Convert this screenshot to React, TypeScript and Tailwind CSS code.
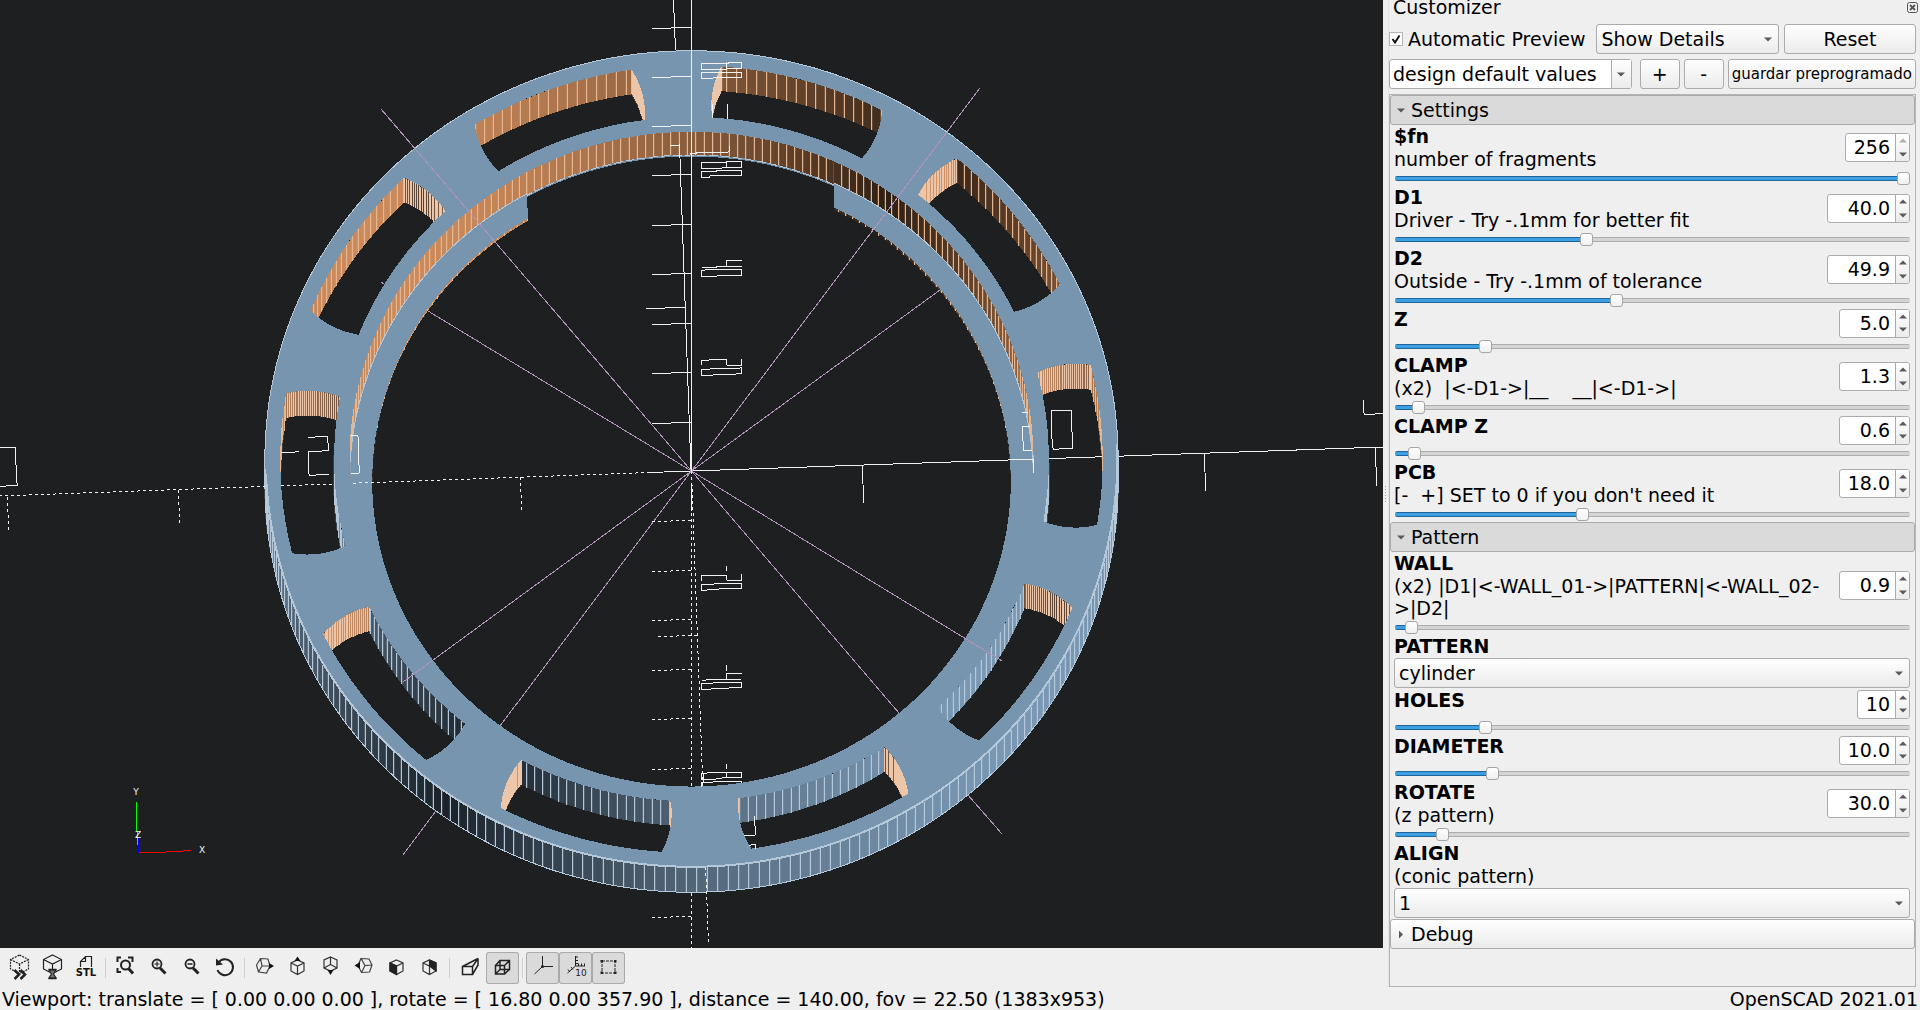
import { useState } from "react";
import type { CSSProperties, ReactNode } from "react";

// ---------------------------------------------------------------------------
// 3D scene: orthographic view of the ring
// ---------------------------------------------------------------------------

const SCALE = 17.1;
const CX = 691.5;
const CY = 471.5;
const TILT = (16.8 * Math.PI) / 180;
const SPIN = (2.1 * Math.PI) / 180;
const STEP = (2 * Math.PI) / 256;

type Rgb = [number, number, number];
const STEEL: Rgb = [122, 152, 180];
const COPPER: Rgb = [204, 138, 90];

const R_OUT = 24.95;
const R_SLOT_OUT = 24.05;
const R_SLOT_IN = 20.9;
const R_IN = 20;
const R_CLAMP = 18.7;
const TOP = 2.5;
const BOTTOM = -2.5;
const LEDGE = -1.9;

const project = (x: number, y: number, z: number) => {
  const vx = x * Math.cos(SPIN) - y * Math.sin(SPIN);
  const vy = x * Math.sin(SPIN) + y * Math.cos(SPIN);
  const sx = CX + SCALE * vx;
  const sy = CY - SCALE * (vy * Math.cos(TILT) + z * Math.sin(TILT));
  return `${sx.toFixed(1)},${sy.toFixed(1)}`;
};

const arc = (r: number, a0: number, a1: number, z: number, cx = 0, cy = 0) => {
  const n = Math.max(2, Math.ceil(Math.abs(a1 - a0) / STEP));
  const pts: string[] = [];
  for (let i = 0; i <= n; i++) {
    const a = a0 + ((a1 - a0) * i) / n;
    pts.push(project(cx + r * Math.cos(a), cy + r * Math.sin(a), z));
  }
  return pts;
};

const shade = (color: Rgb, normal: number) => {
  const light = 0.22 + 0.78 * Math.abs(Math.cos(normal + SPIN - (325 * Math.PI) / 180));
  return `rgb(${color.map((c) => Math.round(c * light)).join(",")})`;
};

interface WallProps {
  r: number;
  from: number;
  to: number;
  top: number;
  bottom: number;
  color: Rgb;
  seam: string;
  cx?: number;
  cy?: number;
  inward?: boolean;
}

const Wall = ({ r, from, to, top, bottom, color, seam, cx = 0, cy = 0, inward = false }: WallProps) => {
  const first = Math.ceil(from / STEP);
  const last = Math.floor(to / STEP);
  const cuts = [from];
  for (let k = first; k <= last; k++) cuts.push(k * STEP);
  cuts.push(to);

  const at = (a: number, z: number) => project(cx + r * Math.cos(a), cy + r * Math.sin(a), z);
  const facing = (a: number) => Math.sin((inward ? a + Math.PI : a) + SPIN) < 0.02;
  const faces: ReactNode[] = [];
  let seams = "";

  for (let i = 0; i < cuts.length - 1; i++) {
    const mid = (cuts[i] + cuts[i + 1]) / 2;
    if (!facing(mid)) continue;
    const [a, b] = [cuts[i], cuts[i + 1]];
    faces.push(
      <polygon
        key={i}
        points={[at(a, top), at(b, top), at(b, bottom), at(a, bottom)].join(" ")}
        fill={shade(color, inward ? mid + Math.PI : mid)}
      />
    );
    seams += `M${at(a, top)}L${at(a, bottom)}`;
  }

  return (
    <g>
      {faces}
      <path d={seams} stroke={seam} strokeWidth="2" strokeOpacity="0.2" fill="none" />
      <path d={seams} stroke={seam} fill="none" />
    </g>
  );
};

const poly = (pts: string[]) => `M${pts.join("L")}Z`;
const line = (pts: string[]) => `M${pts.join("L")}`;

// Each slot is the space between both walls cut by a cylinder of d = 10
const HOLE_R = 5;
const HOLE_C = (R_SLOT_OUT + R_SLOT_IN) / 2;
const hitAngle = (r: number, hole = HOLE_R) =>
  Math.acos((r * r + HOLE_C * HOLE_C - hole * hole) / (2 * r * HOLE_C));
const capAngle = (r: number, half: number) =>
  Math.atan2(r * Math.sin(half), r * Math.cos(half) - HOLE_C);
const OUT_HALF = hitAngle(R_SLOT_OUT);
const IN_HALF = hitAngle(R_SLOT_IN);
const CAP_A = capAngle(R_SLOT_OUT, OUT_HALF);
const CAP_B = capAngle(R_SLOT_IN, IN_HALF);

const slotOutline = (a: number, pad: number) => {
  const cx = HOLE_C * Math.cos(a);
  const cy = HOLE_C * Math.sin(a);
  const outer = R_SLOT_OUT + pad;
  const inner = R_SLOT_IN - pad;
  const hole = HOLE_R + pad;
  const outHalf = hitAngle(outer, hole);
  const inHalf = hitAngle(inner, hole);
  const capA = capAngle(outer, outHalf);
  const capB = capAngle(inner, inHalf);
  return poly([
    ...arc(outer, a - outHalf, a + outHalf, TOP),
    ...arc(hole, a + capA, a + capB, TOP, cx, cy),
    ...arc(inner, a + inHalf, a - inHalf, TOP),
    ...arc(hole, a - capB, a - capA, TOP, cx, cy),
  ]);
};

const slots = Array.from({ length: 10 }, (_, i) => {
  const a = (i * Math.PI) / 5;
  return { a, cx: HOLE_C * Math.cos(a), cy: HOLE_C * Math.sin(a) };
});

const FULL = 2 * Math.PI;
const PCB_Y = Math.acos(9 / R_IN);
const PCB_C = Math.acos(9 / R_CLAMP);

const topFace =
  poly(arc(R_OUT, 0, FULL, TOP)) +
  poly(arc(R_IN, 0, FULL, TOP)) +
  slots.map((s) => slotOutline(s.a, 0)).join("");

const ledge = poly([
  ...arc(R_IN, Math.PI - PCB_Y, FULL + PCB_Y, LEDGE),
  ...arc(R_CLAMP, FULL + PCB_C, Math.PI - PCB_C, LEDGE),
]);

const PEACH = "#edc5a8";
const SAND = "#e4b792";
const PALE = "#b4c8d9";

const Ring = () => (
  <g>
    {/* clips are a bit wider than the openings, the top face hides the rest */}
    <clipPath id="slot-clip">
      <path d={slots.map((s) => slotOutline(s.a, 0.1)).join("")} />
    </clipPath>
    <clipPath id="bore-clip">
      <path d={poly(arc(R_IN + 0.15, 0, FULL, TOP))} />
    </clipPath>

    <Wall r={R_OUT} from={Math.PI - 0.05} to={FULL + 0.02} top={TOP} bottom={BOTTOM} color={STEEL} seam={PALE} />
    <path d={line(arc(R_OUT, Math.PI, FULL, BOTTOM))} stroke={PALE} fill="none" />

    <g clipPath="url(#bore-clip)">
      <Wall r={R_CLAMP} from={0} to={PCB_C} top={LEDGE} bottom={BOTTOM} color={COPPER} seam={SAND} inward />
      <Wall r={R_CLAMP} from={Math.PI - PCB_C} to={Math.PI} top={LEDGE} bottom={BOTTOM} color={COPPER} seam={SAND} inward />
      <Wall r={R_IN} from={PCB_Y} to={Math.PI - PCB_Y} top={TOP} bottom={BOTTOM} color={COPPER} seam={SAND} inward />
      <path d={line(arc(R_IN, PCB_Y, Math.PI - PCB_Y, -2.3))} stroke="#6f8ca5" strokeWidth="2" fill="none" />
      <path d={line(arc(R_IN, PCB_Y, Math.PI - PCB_Y, -2.2))} stroke={PALE} strokeDasharray="9 3" fill="none" />
      <path d={ledge} fill="#7895b0" stroke="#7895b0" />
      <Wall r={R_IN} from={-0.04} to={PCB_Y} top={TOP} bottom={LEDGE} color={COPPER} seam={SAND} inward />
      <Wall r={R_IN} from={Math.PI - PCB_Y} to={Math.PI} top={TOP} bottom={LEDGE} color={COPPER} seam={SAND} inward />
      <path d={line(arc(R_IN, 0, PCB_Y, LEDGE))} stroke={PALE} fill="none" />
      <path d={line(arc(R_IN, Math.PI - PCB_Y, Math.PI, LEDGE))} stroke={PALE} fill="none" />
    </g>

    {/* X and Y axes run inside the body, so the top face goes over them */}
    <g stroke="#f2f2f2" fill="none">
      <path d="M691.5 471L1383 447M691 471L679.5 144M675.5 50L673.5 0" />
      <path d="M862 465L864 503M1204 453L1206 491M1375 447L1377 486M646 309L685 307" />
      <path d="M650 472.5L691 471" />
      <path d="M650 472.5L0 496M691.5 471L708.5 945" strokeDasharray="3 3" />
      <path d="M520 477L522 513M178 490L180 526M7 497L9 532M658 637L697 635" strokeDasharray="3 3" />
    </g>

    <g clipPath="url(#slot-clip)">
      {slots.map(({ a, cx, cy }) => (
        <g key={a}>
          <Wall r={R_SLOT_IN} from={a - IN_HALF} to={a + IN_HALF} top={TOP} bottom={BOTTOM} color={STEEL} seam={PALE} />
          <Wall r={R_SLOT_OUT} from={a - OUT_HALF} to={a + OUT_HALF} top={TOP} bottom={BOTTOM} color={COPPER} seam={SAND} inward />
          <Wall r={HOLE_R} cx={cx} cy={cy} from={a + CAP_A} to={a + CAP_B} top={TOP} bottom={BOTTOM} color={COPPER} seam={PEACH} inward />
          <Wall r={HOLE_R} cx={cx} cy={cy} from={a - CAP_B} to={a - CAP_A} top={TOP} bottom={BOTTOM} color={COPPER} seam={PEACH} inward />
        </g>
      ))}
    </g>

    <path d={topFace} fill="#7895b0" fillRule="evenodd" />
    <path d={line(arc(R_OUT, -0.05, Math.PI + 0.05, TOP))} stroke={PALE} fill="none" />
    <path d={line(arc(R_OUT - 0.05, Math.PI, FULL, TOP))} stroke={PALE} strokeWidth="2" fill="none" />
  </g>
);

const zTicksUp = [28, 77, 126, 175, 225, 274, 324, 373, 423];
const zTicksDown = [521, 571, 620, 670, 719, 769, 917];

const Guides = () => (
  <g fill="none">
    <g stroke="#b294bb">
      <path d="M691.5 471L381 109M691.5 471L980 88M691.5 471L428 311M381 282L384 284" />
      <path d="M691.5 471L940 290M691.5 471L1002 661M691.5 471L403 682" />
      <path d="M691.5 471L899 713M968 795L1002 834M691.5 471L500 726M436 811L403 855" />
    </g>
    <g stroke="#f2f2f2">
      <path d="M691.5 0V471" />
      <path d={zTicksUp.map((y) => `M652 ${y + 1}L691 ${y - 1}`).join("")} />
      <path d="M691.5 471V787M691.5 893V948" strokeDasharray="3 3" />
      <path d={zTicksDown.map((y) => `M652 ${y + 1}L691 ${y - 1}`).join("")} strokeDasharray="3 3" />
      <path d="M691.5 486V511" />
      <path d="M670 145H679V155" />
    </g>
    {/* stroke fragments of the scale markers */}
    <g stroke="#f2f2f2" strokeWidth="3">
      <g transform="translate(690 30) scale(0.3333)">
        <path d="M34 100H117V97H155V116H110V119H34ZM110 119V97M34 127H155V142H70V145H34Z" />
        <path d="M34 397H110V412L90 415H34ZM110 412V394H155V412H110M34 424H80V421H155V438H60V442H34Z" />
        <path d="M155 691H110V709M36 712H80V709H155M34 721L72 718H155V736L50 739H34Z" />
        <path d="M34 1006V991L110 988V1006H155V988M34 1018L155 1014V1030L130 1033L45 1036H34Z" />
        <path d="M67 222V264M112 222V267M0 370H20V367H115V364H118V348" />
        <path d="M1084 1172V1141H1145V1175L1148 1255L1090 1258L1087 1250ZM1027 1261H1000V1250L997 1189H1020M996 1147H1014" />
        <path d="M1030 1288V1330" />
      </g>
      <g transform="translate(690 470) scale(0.3333)">
        <path d="M34 332V316H108M110 288V304M110 316V331H155V313M34 343L155 340V355L58 358L46 361H34Z" />
        <path d="M155 610H110V628M110 585V602M36 631L80 628H152M34 640L155 637V652L46 658H34Z" />
        <path d="M34 928V910L90 907H155V922H110V907M110 882V897M34 928H72L110 922M34 950V937L155 934V938M40 910V935" />
        <path d="M193 1038V1068H196V1096H163M177 1126L196 1123V1137" />
      </g>
      <g transform="translate(0 430) scale(0.3333)">
        <path d="M924 22L984 19V38L986 62L925 65V118L928 136L987 133M842 67H880L897 64" />
        <path d="M0 52H47V78L50 157L53 166L0 169M1052 16H1074L1078 130H1052" />
      </g>
      <path d="M730 90V117L733 133L768 132L789 129" transform="translate(1120 370) scale(0.3333)" />
    </g>
  </g>
);

const Gizmo = () => (
  <g fill="none">
    <path d="M136.5 802V818L137.5 845" stroke="#00ff00" />
    <path d="M138.5 838V853" stroke="#0000ff" />
    <path d="M139 852.5H158L191 850.5" stroke="#ff0000" />
    <g fill="#f2f2f2" className="font-['DejaVu_Sans'] text-[9px]" textAnchor="middle">
      <text x="136" y="795">Y</text>
      <text x="138" y="838">Z</text>
      <text x="202" y="853">X</text>
    </g>
  </g>
);

// ---------------------------------------------------------------------------
// Toolbar
// ---------------------------------------------------------------------------

const hexagon = "M16.5 3L25.5 7.5V17L16.5 21.5L7.5 17V7.5ZM7.5 7.5L16.5 12L25.5 7.5M16.5 12V21.5";
const box = "M16.5 8L23 11V19L16.5 22.5L10 19V11ZM10 11L16.5 14L23 11M16.5 14V22.5";

const icons: Record<string, ReactNode> = {
  Preview: (
    <>
      <path d={hexagon} strokeDasharray="2 1" />
      <path d="M11.5 18L16 22.5L11.5 27M17.5 18L22 22.5L17.5 27" strokeWidth="2.5" />
    </>
  ),
  Render: (
    <>
      <path d={hexagon} />
      <path d="M13 18H20L17.5 22L20 26H13L15.5 22Z" fill="#777" />
      <path d="M12.5 17.5H20.5M12.5 26.5H20.5" strokeWidth="1.5" />
    </>
  ),
  "Export as STL": (
    <>
      <path d="M11.5 15V9.5L16.5 4.5H22.5V15M11.5 9.5H16.5V4.5" />
      <text x="17" y="24" textAnchor="middle" stroke="none" fill="#111" className="font-['DejaVu_Sans'] text-[10px] font-bold">
        STL
      </text>
    </>
  ),
  "View All": (
    <>
      <path d="M8.5 10V5.5H12M19 5.5H23.5V10M8.5 16V20H12" strokeWidth="2" />
      <circle cx="16.5" cy="13" r="4.5" strokeWidth="2" />
      <path d="M19.5 16.5L24 21.5" strokeWidth="3" />
    </>
  ),
  "Zoom In": (
    <>
      <circle cx="15" cy="12" r="4.5" strokeWidth="1.8" />
      <path d="M12.5 12H17.5M15 9.5V14.5" />
      <path d="M18 16L23.5 21.5" strokeWidth="3" />
    </>
  ),
  "Zoom Out": (
    <>
      <circle cx="15" cy="12" r="4.5" strokeWidth="1.8" />
      <path d="M12.5 12H17.5" strokeWidth="1.5" />
      <path d="M18 16L23.5 21.5" strokeWidth="3" />
    </>
  ),
  "Reset View": (
    <>
      <path d="M10.5 10.5A8 8 0 1 1 9.5 18" strokeWidth="2" />
      <path d="M8 6.5V13.5L15 12.5Z" fill="#222" stroke="none" />
    </>
  ),
  Right: (
    <>
      <path d="M12.5 6.5L20 7L22 14L18.5 21L10.5 20L8.5 13ZM12.5 6.5L14 14L10.5 20M14 14H22" stroke="#444" />
      <path d="M21 11L26 14L21 17Z" fill="#111" stroke="none" />
    </>
  ),
  Top: (
    <>
      <path d={box} stroke="#333" />
      <path d="M13.5 9L16.5 4.5L19.5 9Z" fill="#111" stroke="none" />
    </>
  ),
  Bottom: (
    <>
      <path d="M16.5 5L23 8V16L16.5 19L10 16V8ZM16.5 5V12.5L10 16M16.5 12.5L23 16" stroke="#333" />
      <path d="M13.5 18L16.5 23L19.5 18Z" fill="#111" stroke="none" />
    </>
  ),
  Left: (
    <>
      <path d="M14 6.5L22 7L25 13L22.5 20L14.5 20.5L11 13.5ZM25 13L18 13.5L14 6.5M18 13.5L14.5 20.5" stroke="#444" />
      <path d="M13 10L7.5 13.5L13 17Z" fill="#111" stroke="none" />
    </>
  ),
  Front: (
    <>
      <path d={box} stroke="#333" />
      <path d="M10 11L16.5 14V22.5L10 19Z" fill="#222" />
    </>
  ),
  Back: (
    <>
      <path d={box} stroke="#333" />
      <path d="M16.5 8L23 11V19L16.5 14Z" fill="#222" />
    </>
  ),
  Perspective: <path d="M9.5 14.5H19.5V22.5H9.5ZM9.5 14.5L25 6.5L19.5 14.5M25 6.5V13L19.5 22.5" strokeWidth="1.5" />,
  Orthogonal: (
    <path
      d="M9.5 13.5H18.5V22H9.5ZM14 8.5H23.5V17.5H14ZM9.5 13.5L14 8.5M18.5 13.5L23.5 8.5M18.5 22L23.5 17.5M9.5 22L14 17.5"
      strokeWidth="1.5"
    />
  ),
  "Show Axes": (
    <>
      <path d="M16.5 4V14.5H27M16.5 14.5L8.5 22" strokeWidth="1" />
      <circle cx="16.5" cy="14.5" r="1.5" fill="#222" stroke="none" />
    </>
  ),
  "Show Scale Markers": (
    <>
      <path
        d="M16.5 4V14H26M16.5 5H19M16.5 8.5H19M16.5 11.5H19M19.5 14V11.5M22.5 14V11.5M25.5 14V11.5M16.5 14L8.5 21M9 17.5L11 20M12 15L14 17.5"
        strokeWidth="1"
      />
      <text x="22" y="24" textAnchor="middle" stroke="none" fill="#222" className="font-['DejaVu_Sans'] text-[9px]">
        10
      </text>
    </>
  ),
  "Show Edges": (
    <>
      <rect x="10" y="9" width="13" height="12" strokeDasharray="3 1" strokeWidth="1" />
      <path d="M8.5 8H11V10.5H8.5ZM22 8H24.5V10.5H22ZM8.5 19.5H11V22H8.5ZM22 19.5H24.5V22H22Z" fill="#222" stroke="none" />
    </>
  ),
};

const toolGroups = [
  ["Preview", "Render", "Export as STL"],
  ["View All", "Zoom In", "Zoom Out", "Reset View"],
  ["Right", "Top", "Bottom", "Left", "Front", "Back"],
  ["Perspective", "Orthogonal"],
  ["Show Axes", "Show Scale Markers", "Show Edges"],
];

const ToolButton = ({ name, pressed, onClick }: { name: string; pressed: boolean; onClick: () => void }) => (
  <button
    type="button"
    aria-label={name}
    aria-pressed={pressed}
    onClick={onClick}
    className={
      pressed
        ? "h-8 w-[33px] rounded-[3px] bg-[#dadada] shadow-[inset_0_0_0_1px_#aaaaaa]"
        : "h-8 w-[33px] rounded-[3px]"
    }
  >
    <svg viewBox="0 0 33 32" className="h-8 w-[33px]" fill="none" stroke="#222" strokeWidth="1.2" aria-hidden="true">
      {icons[name]}
    </svg>
  </button>
);

const Toolbar = () => {
  const [pressed, setPressed] = useState(["Orthogonal", "Show Axes", "Show Scale Markers", "Show Edges"]);

  const toggle = (name: string) => {
    if (!name.startsWith("Show")) return;
    setPressed((prev) => (prev.includes(name) ? prev.filter((n) => n !== name) : [...prev, name]));
  };

  return (
    <div role="toolbar" aria-label="View" className="flex items-center gap-[7px] px-[3px] pt-1 pb-[3px]">
      {toolGroups.map((group, i) => (
        <div key={group[0]} className="flex items-center gap-[7px]">
          {i > 0 && <span className="-mx-1 h-5 w-px bg-[#cfcfcf]" />}
          <div className="flex">
            {group.map((name) => (
              <ToolButton key={name} name={name} pressed={pressed.includes(name)} onClick={() => toggle(name)} />
            ))}
          </div>
        </div>
      ))}
    </div>
  );
};

// ---------------------------------------------------------------------------
// Customizer
// ---------------------------------------------------------------------------

const raised = "rounded-[3px] border border-[#ababab] bg-linear-to-b from-white to-[#ebebeb]";

const Arrow = ({ className = "" }: { className?: string }) => (
  <svg viewBox="0 0 8 5" className={`h-[5px] w-2 ${className}`} aria-hidden="true">
    <path d="M0 0.5H8L4 4.5Z" fill="currentColor" />
  </svg>
);

interface ComboProps {
  id: string;
  label?: string;
  options: string[];
  className?: string;
}

const Combo = ({ id, label, options, className = "" }: ComboProps) => (
  <div className={`relative h-[30px] ${raised} ${className}`}>
    <select id={id} aria-label={label} className="block h-full w-full appearance-none bg-transparent pr-6 pl-1 outline-none">
      {options.map((o) => (
        <option key={o}>{o}</option>
      ))}
    </select>
    <Arrow className="pointer-events-none absolute top-3 right-[6px] text-[#5a5a5a]" />
  </div>
);

interface Param {
  name: string;
  hint?: string;
  value?: string;
  min?: number;
  max?: number;
  step?: number;
  options?: string[];
  spinClass?: string;
}

const settings: Param[] = [
  { name: "$fn", hint: "number of fragments", value: "256", min: 0, max: 256, step: 1, spinClass: "w-[65px]" },
  { name: "D1", hint: "Driver - Try -.1mm for better fit", value: "40.0", min: 5, max: 100, step: 0.1, spinClass: "w-[83px]" },
  { name: "D2", hint: "Outside - Try -.1mm of tolerance", value: "49.9", min: 5, max: 110, step: 0.1, spinClass: "w-[83px]" },
  { name: "Z", value: "5.0", min: 0, max: 30, step: 0.1, spinClass: "w-[71px]" },
  { name: "CLAMP", hint: "(x2)  |<-D1->|__    __|<-D1->|", value: "1.3", min: 0, max: 38, step: 0.1, spinClass: "w-[71px]" },
  { name: "CLAMP Z", value: "0.6", min: 0, max: 24, step: 0.1, spinClass: "w-[71px]" },
  { name: "PCB", hint: "[-  +] SET to 0 if you don't need it", value: "18.0", min: 0, max: 50, step: 0.1, spinClass: "w-[71px]" },
];

const pattern: Param[] = [
  { name: "WALL", hint: "(x2) |D1|<-WALL_01->|PATTERN|<-WALL_02->|D2|", value: "0.9", min: 0, max: 46, step: 0.1, spinClass: "w-[71px]" },
  { name: "PATTERN", options: ["cylinder", "cube", "conic"] },
  { name: "HOLES", value: "10", min: 0, max: 60, step: 1, spinClass: "w-[53px]" },
  { name: "DIAMETER", value: "10.0", min: 0, max: 55, step: 0.1, spinClass: "w-[71px]" },
  { name: "ROTATE", hint: "(z pattern)", value: "30.0", min: 0, max: 370, step: 1, spinClass: "w-[83px]" },
  { name: "ALIGN", hint: "(conic pattern)", options: ["1", "2", "3"] },
];

const ParamRow = ({ param }: { param: Param }) => {
  const { name, hint, min = 0, max = 100, step = 1 } = param;
  const [text, setText] = useState(param.value ?? "");
  const id = `param-${name.replace(/\W/g, "").toLowerCase()}`;
  const number = Number(text) || 0;
  const digits = param.value?.includes(".") ? 1 : 0;
  const set = (n: number) => setText(Math.min(max, Math.max(min, n)).toFixed(digits));

  const caption = (
    <label htmlFor={id} className="block min-w-0 flex-1 pr-3 leading-[22px]">
      <span className="block font-bold leading-[23px]">{name}</span>
      {hint && <span className="block whitespace-pre-wrap">{hint}</span>}
    </label>
  );

  if (param.options) {
    return (
      <div className="pr-[5px] pb-px pl-1">
        {caption}
        <Combo id={id} options={param.options} className={hint ? "mt-px" : ""} />
      </div>
    );
  }

  const fill = { "--fill": `${((number - min) / (max - min)) * 98 + 1}%` } as CSSProperties;

  return (
    <div className="pr-[5px] pl-1">
      <div className="flex min-h-[30px] items-center justify-between">
        <div className="flex min-w-0 flex-1 self-start">{caption}</div>
        <div className={`flex h-[29px] shrink-0 overflow-hidden rounded-[3px] border border-[#ababab] bg-white ${param.spinClass}`}>
          <input
            id={id}
            type="text"
            inputMode="decimal"
            value={text}
            onChange={(e) => setText(e.target.value)}
            className="w-0 flex-1 bg-transparent pr-[5px] text-right outline-none"
          />
          <div className="flex w-[14px] flex-col border-l border-[#ababab] bg-linear-to-b from-white to-[#ebebeb]">
            <button
              type="button"
              aria-label={`Increase ${name}`}
              disabled={number >= max}
              onClick={() => set(number + step)}
              className="flex flex-1 items-center justify-center text-[#5a5a5a] disabled:text-[#b0b0b0]"
            >
              <Arrow className="rotate-180" />
            </button>
            <button
              type="button"
              aria-label={`Decrease ${name}`}
              disabled={number <= min}
              onClick={() => set(number - step)}
              className="flex flex-1 items-center justify-center text-[#5a5a5a] disabled:text-[#b0b0b0]"
            >
              <Arrow />
            </button>
          </div>
        </div>
      </div>
      <div className="pl-px">
        <input
          type="range"
          aria-label={`${name} slider`}
          min={min}
          max={max}
          step="any"
          value={number}
          onChange={(e) => set(Number(e.target.value))}
          style={fill}
          className="block h-4 w-full appearance-none bg-transparent outline-none [&::-webkit-slider-runnable-track]:h-[5px] [&::-webkit-slider-runnable-track]:rounded-[2px] [&::-webkit-slider-runnable-track]:bg-[linear-gradient(to_bottom,#1c6699_0_1px,#3d9fe2_1px_4px,#1c6699_4px),linear-gradient(to_bottom,#adadad_0_1px,#d4d4d4_1px_4px,#adadad_4px)] [&::-webkit-slider-runnable-track]:[background-size:var(--fill)_100%,100%_100%] [&::-webkit-slider-runnable-track]:bg-no-repeat [&::-webkit-slider-thumb]:-mt-1 [&::-webkit-slider-thumb]:size-[13px] [&::-webkit-slider-thumb]:appearance-none [&::-webkit-slider-thumb]:rounded-[3px] [&::-webkit-slider-thumb]:border [&::-webkit-slider-thumb]:border-[#a5a5a5] [&::-webkit-slider-thumb]:bg-linear-to-b [&::-webkit-slider-thumb]:from-white [&::-webkit-slider-thumb]:to-[#f0f0f0]"
        />
      </div>
    </div>
  );
};

const Section = ({ title, params, initial = true }: { title: string; params: Param[]; initial?: boolean }) => {
  const [open, setOpen] = useState(initial);
  return (
    <section>
      <button
        type="button"
        aria-expanded={open}
        onClick={() => setOpen((prev) => !prev)}
        className={`flex h-[30px] w-full items-center gap-[6px] rounded-[3px] border border-[#ababab] px-[6px] text-left ${
          open ? "bg-[#dadada]" : "bg-linear-to-b from-white to-[#ebebeb]"
        }`}
      >
        <Arrow className={open ? "text-[#5a5a5a]" : "-rotate-90 text-[#5a5a5a]"} />
        {title}
      </button>
      {open && params.map((p) => <ParamRow key={p.name} param={p} />)}
    </section>
  );
};

const Customizer = () => {
  const [auto, setAuto] = useState(true);

  return (
    <aside className="flex w-[537px] shrink-0">
      <div className="flex w-[6px] flex-col items-center justify-center gap-[2px] border-r border-[#e4e4e4]">
        {[0, 1, 2, 3, 4, 5].map((i) => (
          <span key={i} className="size-px bg-[#a0a0a0]" />
        ))}
      </div>
      <div className="flex min-w-0 flex-1 flex-col pr-1">
        <div className="flex h-[24px] items-start justify-between pl-1">
          <h2 className="leading-[15px]">Customizer</h2>
          <button type="button" aria-label="Close" className="mt-[2px] -mr-[2px]">
            <svg viewBox="0 0 11 11" className="size-[11px]" fill="none" stroke="#555" aria-hidden="true">
              <rect x="0.5" y="0.5" width="10" height="10" rx="2" />
              <path d="M3 3L8 8M8 3L3 8" strokeWidth="1.8" />
            </svg>
          </button>
        </div>

        <div className="flex items-center gap-[5px]">
          <label className="mr-[6px] flex items-center gap-[5px]">
            <span className="relative flex">
              <input
                type="checkbox"
                checked={auto}
                onChange={(e) => setAuto(e.target.checked)}
                className="size-[14px] appearance-none border border-[#b5b5b5] bg-white"
              />
              {auto && (
                <svg viewBox="0 0 14 14" className="pointer-events-none absolute inset-0 size-[14px]" fill="none" stroke="#111" strokeWidth="2">
                  <path d="M3.5 7L6 10.5L10.5 3.5" />
                </svg>
              )}
            </span>
            <span className="whitespace-nowrap">Automatic Preview</span>
          </label>
          <Combo id="detail" label="Detail level" options={["Show Details", "Inline Details", "Hide Details", "Description Only"]} className="flex-[183]" />
          <button type="button" className={`h-[30px] flex-[132] ${raised}`}>
            Reset
          </button>
        </div>

        <div className="mt-[5px] flex gap-1">
          <div className="relative mr-1 h-[30px] min-w-0 flex-1 rounded-[3px] border border-[#ababab] bg-white">
            <select aria-label="Preset" className="block h-full w-full appearance-none bg-transparent pr-5 pl-[3px] outline-none">
              <option>design default values</option>
            </select>
            <span className="pointer-events-none absolute inset-y-0 right-0 flex w-5 items-center justify-center border-l border-[#ababab] bg-linear-to-b from-white to-[#ebebeb] text-[#5a5a5a]">
              <Arrow />
            </span>
          </div>
          <button type="button" aria-label="Add preset" className={`h-[30px] w-10 ${raised}`}>
            +
          </button>
          <button type="button" aria-label="Remove preset" className={`h-[30px] w-10 ${raised}`}>
            -
          </button>
          <button type="button" className={`h-[30px] px-[3px] text-[15px] ${raised}`}>
            guardar preprogramado
          </button>
        </div>

        <div className="mt-[5px] min-h-0 flex-1 overflow-hidden border border-[#b4b4b4]">
          <Section title="Settings" params={settings} />
          <Section title="Pattern" params={pattern} />
          <Section title="Debug" params={[]} initial={false} />
        </div>
      </div>
    </aside>
  );
};

const App = () => (
  <div className="flex h-screen flex-col overflow-hidden bg-[#efefef] font-['DejaVu_Sans',sans-serif] text-[19px] text-black">
    <div className="flex min-h-0 flex-1">
      <main className="flex min-w-0 flex-1 flex-col">
        <div className="min-h-0 flex-1 bg-[#1d1f21]">
          <svg
            viewBox="0 0 1383 948"
            preserveAspectRatio="xMidYMid slice"
            className="block h-full w-full"
            shapeRendering="crispEdges"
            role="img"
            aria-label="3D view"
          >
            <Ring />
            <Guides />
            <Gizmo />
          </svg>
        </div>
        <Toolbar />
      </main>
      <Customizer />
    </div>
    <footer className="flex h-[23px] items-center justify-between px-[2px] pt-px whitespace-nowrap">
      <span>Viewport: translate = [ 0.00 0.00 0.00 ], rotate = [ 16.80 0.00 357.90 ], distance = 140.00, fov = 22.50 (1383x953)</span>
      <span>OpenSCAD 2021.01</span>
    </footer>
  </div>
);

export default App;
